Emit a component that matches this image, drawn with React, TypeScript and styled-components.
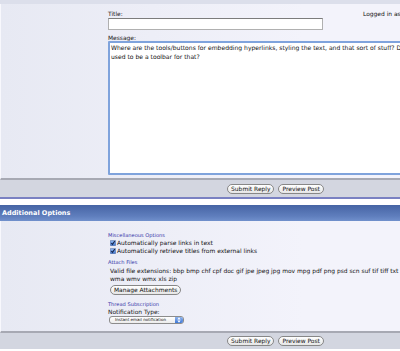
import React from 'react';
import styled, { createGlobalStyle } from 'styled-components';

const GlobalStyle = createGlobalStyle`
  body {
    margin: 0;
    overflow: hidden;
    background: #ffffff;
    font-family: "DejaVu Sans", "Liberation Sans", sans-serif;
    font-size: 5.95px;
    color: #111111;
  }
`;

const Page = styled.div`
  width: 551px;
`;

const TopStrip = styled.div`
  height: 4px;
  background: #dcdfeb;
`;

const Panel = styled.div<{ $top: number; $bottom: number }>`
  display: grid;
  grid-template-columns: 107px 1fr;
  padding: ${(p) => p.$top}px 0 ${(p) => p.$bottom}px 0;
  background: linear-gradient(to right, #e7e9f3, #f3f3fb 55%);
  border-left: 1px solid #f8f8fd;
  border-bottom: 2px solid #a7a9b3;
`;

const Column = styled.div`
  display: flex;
  flex-direction: column;
  align-items: flex-start;
`;

const TitleRow = styled.div`
  display: flex;
  align-items: flex-start;
  gap: 40px;
`;

const FieldLabel = styled.label<{ $lh?: number; $mt?: number }>`
  display: block;
  line-height: ${(p) => p.$lh ?? 8}px;
  margin-top: ${(p) => p.$mt ?? 0}px;
  color: #1a1a1a;
`;

const TitleInput = styled.input`
  box-sizing: border-box;
  width: 215px;
  height: 12px;
  margin: 0;
  padding: 0 2px;
  border: 1px solid #b0b0b0;
  border-top-color: #7c7c7c;
  background: #ffffff;
  font: inherit;
`;

const LoggedIn = styled.div`
  line-height: 8px;
  white-space: nowrap;
`;

const MessageBox = styled.textarea`
  box-sizing: border-box;
  width: 420px;
  height: 134px;
  margin: 0;
  padding: 1px 1px;
  border: 2px solid #7fa3dc;
  border-radius: 1px;
  background: #ffffff;
  font: inherit;
  font-size: 6.05px;
  line-height: 8.5px;
  color: #111111;
  resize: none;
  overflow: hidden;
  outline: none;
`;

const ButtonBar = styled.div<{ $h: number }>`
  height: ${(p) => p.$h}px;
  display: flex;
  justify-content: center;
  align-items: center;
  gap: 4px;
  background: #d3d6e0;
`;

const PillButton = styled.button`
  box-sizing: border-box;
  height: 10px;
  margin: 0;
  padding: 0 3px;
  border: 1px solid #878787;
  border-radius: 5px;
  background: linear-gradient(#ffffff, #e6e6e6);
  font: inherit;
  line-height: 8px;
  color: #111111;
  white-space: nowrap;
`;

const BlueRule = styled.div`
  height: 2px;
  background: #7a81c2;
`;

const WhiteGap = styled.div`
  height: 6px;
  background: #ffffff;
`;

const SectionHeader = styled.div`
  height: 16px;
  padding-left: 2px;
  background: linear-gradient(#4664a4, #5f7ebd 70%, #7090cc);
  color: #ffffff;
  font-weight: bold;
  font-size: 6.5px;
  line-height: 17px;
`;

const GroupTitle = styled.div<{ $mt?: number }>`
  margin-top: ${(p) => p.$mt ?? 0}px;
  line-height: 7px;
  font-size: 5.1px;
  color: #3434a8;
  white-space: nowrap;
`;

const CheckRow = styled.label`
  display: flex;
  align-items: center;
  gap: 1px;
  padding-left: 2px;
  line-height: 8px;
  white-space: nowrap;
`;

const Checkmark = styled.svg`
  width: 6px;
  height: 6px;
  flex: none;
`;

const Extensions = styled.div`
  margin-top: 1px;
  line-height: 7.5px;
  padding-left: 2px;
  white-space: nowrap;
`;

const SmallButton = styled(PillButton)`
  margin-top: 3px;
  margin-left: 2px;
  height: 10px;
`;

const SelectBox = styled.div`
  box-sizing: border-box;
  display: flex;
  align-items: center;
  width: 75px;
  height: 8px;
  margin-left: 1px;
  border: 1px solid #8c8c8c;
  border-radius: 3px;
  background: linear-gradient(#ffffff, #ececec);
  overflow: hidden;
`;

const SelectText = styled.span`
  flex: 1;
  padding-left: 5px;
  font-size: 4.1px;
  line-height: 6px;
  white-space: nowrap;
`;

const Stepper = styled.span`
  width: 8px;
  height: 100%;
  display: flex;
  align-items: center;
  justify-content: center;
  background: linear-gradient(#8fb3ec, #3f78d6);
`;

const Check = () => (
  <Checkmark viewBox="0 0 6 6">
    <defs>
      <linearGradient id="cb" x1="0" y1="0" x2="0" y2="1">
        <stop offset="0" stopColor="#9cc0f2" />
        <stop offset="1" stopColor="#3a74d4" />
      </linearGradient>
    </defs>
    <rect x="0.25" y="0.25" width="5.5" height="5.5" rx="1" fill="url(#cb)" stroke="#4a5f8a" strokeWidth="0.5" />
    <path d="M1.3 3 L2.5 4.4 L4.8 1" fill="none" stroke="#15254a" strokeWidth="1.1" />
  </Checkmark>
);

const App = () => {
  return (
    <Page>
      <GlobalStyle />
      <TopStrip />
      <Panel $top={6} $bottom={3}>
        <div />
        <Column>
          <TitleRow>
            <Column>
              <FieldLabel>Title:</FieldLabel>
              <TitleInput type="text" />
            </Column>
            <LoggedIn>Logged in as</LoggedIn>
          </TitleRow>
          <FieldLabel $lh={7} $mt={4}>Message:</FieldLabel>
          <MessageBox
            readOnly
            wrap="off"
            defaultValue={
              "Where are the tools/buttons for embedding hyperlinks, styling the text, and that sort of stuff? Didn't there\nused to be a toolbar for that?"
            }
          />
        </Column>
      </Panel>
      <ButtonBar $h={17}>
        <PillButton>Submit Reply</PillButton>
        <PillButton>Preview Post</PillButton>
      </ButtonBar>
      <BlueRule />
      <WhiteGap />
      <SectionHeader>Additional Options</SectionHeader>
      <Panel $top={11} $bottom={7}>
        <div />
        <Column>
          <GroupTitle>Miscellaneous Options</GroupTitle>
          <CheckRow>
            <Check />
            Automatically parse links in text
          </CheckRow>
          <CheckRow>
            <Check />
            Automatically retrieve titles from external links
          </CheckRow>
          <GroupTitle $mt={4}>Attach Files</GroupTitle>
          <Extensions>
            Valid file extensions: bbp bmp chf cpf doc gif jpe jpeg jpg mov mpg pdf png psd scn suf tif tiff txt
            <br />
            wma wmv wmx xls zip
          </Extensions>
          <SmallButton>Manage Attachments</SmallButton>
          <GroupTitle $mt={6}>Thread Subscription</GroupTitle>
          <FieldLabel>Notification Type:</FieldLabel>
          <SelectBox>
            <SelectText>Instant email notification</SelectText>
            <Stepper>
              <svg width="4" height="6" viewBox="0 0 4 6">
                <path d="M2 0.3 L3.6 2.4 H0.4 Z M2 5.7 L3.6 3.6 H0.4 Z" fill="#ffffff" />
              </svg>
            </Stepper>
          </SelectBox>
        </Column>
      </Panel>
      <ButtonBar $h={16}>
        <PillButton>Submit Reply</PillButton>
        <PillButton>Preview Post</PillButton>
      </ButtonBar>
    </Page>
  );
};

export default App;
